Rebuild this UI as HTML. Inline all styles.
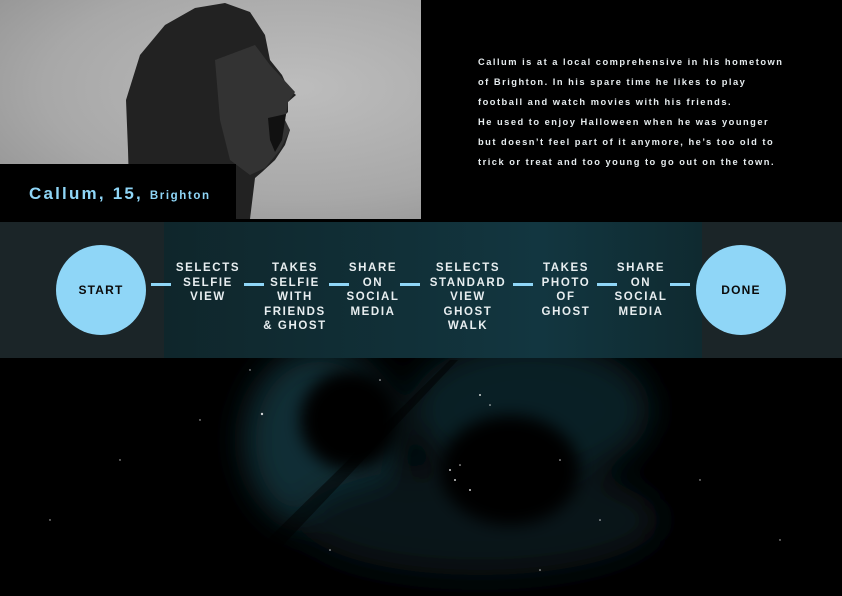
<!DOCTYPE html>
<html><head><meta charset="utf-8"><style>
*{margin:0;padding:0;box-sizing:border-box}
body{width:842px;height:596px;background:#000;position:relative;overflow:hidden;font-family:"Liberation Sans",sans-serif;font-weight:bold}
.abs{position:absolute}
.step{position:absolute;top:261px;color:#e8eef0;font-size:11.5px;letter-spacing:1.6px;line-height:14.5px;text-align:center}
.dash{position:absolute;top:283px;height:3px;background:#8fd6f7}
.circ{position:absolute;width:90px;height:90px;border-radius:50%;background:#8fd6f7;color:#0a0a0a;font-size:12px;letter-spacing:1.2px;display:flex;align-items:center;justify-content:center;top:245px}
p.bio{position:absolute;left:478px;top:52px;width:340px;color:#e6ecee;font-size:9.3px;letter-spacing:1.5px;line-height:20px}
</style></head><body>
<svg class="abs" style="left:0;top:0" width="842" height="596">
<defs>
<filter id="b"><feGaussianBlur stdDeviation="16"/></filter>
<filter id="b2"><feGaussianBlur stdDeviation="8"/></filter>
</defs>
<g filter="url(#b)" opacity="0.75">
<ellipse cx="320" cy="440" rx="75" ry="90" fill="#163e47"/>
<ellipse cx="530" cy="410" rx="120" ry="70" fill="#0f2c33"/>
<ellipse cx="480" cy="520" rx="180" ry="55" fill="#0a1f24"/>
</g>
<g filter="url(#b2)">
<ellipse cx="350" cy="420" rx="50" ry="50" fill="#000"/>
<ellipse cx="510" cy="470" rx="70" ry="55" fill="#000"/>
</g>
<polygon points="450,360 210,596 235,596 458,360" fill="#000" opacity="0.5"/>
<g fill="#fff" opacity="0.8">
<circle cx="262" cy="414" r="1.2"/><circle cx="450" cy="470" r="1"/><circle cx="455" cy="480" r="1"/><circle cx="460" cy="465" r="0.8"/><circle cx="470" cy="490" r="1"/><circle cx="480" cy="395" r="1"/><circle cx="490" cy="405" r="0.8"/><circle cx="560" cy="460" r="0.8"/><circle cx="380" cy="380" r="0.8"/><circle cx="200" cy="420" r="0.7"/><circle cx="120" cy="460" r="0.7"/><circle cx="600" cy="520" r="0.8"/><circle cx="700" cy="480" r="0.7"/><circle cx="780" cy="540" r="0.7"/><circle cx="50" cy="520" r="0.7"/><circle cx="330" cy="550" r="0.8"/><circle cx="540" cy="570" r="0.8"/><circle cx="250" cy="370" r="0.7"/>
</g>
</svg>
<div class="abs" style="left:0;top:222px;width:842px;height:136px;background:#1b2528"></div>
<div class="abs" style="left:164px;top:222px;width:538px;height:136px;background:linear-gradient(90deg,#0f262b 0%,#113038 45%,#123640 70%,#0f2a30 100%)"></div>
<div class="abs" style="left:0;top:0;width:421px;height:219px;background:radial-gradient(ellipse at 70% 40%,#bdbdbd,#a8a8a8 60%,#8e8e8e)"></div>
<svg class="abs" style="left:0;top:0" width="421" height="219">
<path d="M130,219 L128,150 L126,100 L140,55 L165,25 L195,8 L225,3 L250,12 L265,35 L270,60 L282,75 L288,88 L296,95 L288,102 L288,112 L282,118 L290,130 L285,145 L275,160 L262,172 L255,178 L250,219 Z" fill="#222"/>
<path d="M215,60 L255,45 L270,65 L284,80 L295,92 L288,102 L285,120 L290,130 L280,150 L265,168 L250,175 L230,160 L220,120 Z" fill="#333"/>
<path d="M268,118 L286,114 L282,140 L275,152 L270,140 Z" fill="#111"/>
</svg>
<div class="abs" style="left:0;top:164px;width:236px;height:56px;background:#000"></div>
<div class="abs" style="left:29px;top:184px;color:#8fd6f7;font-size:17px;letter-spacing:2.2px">Callum, 15, <span style="font-size:11.5px;letter-spacing:1.6px">Brighton</span></div>
<div class="abs" style="left:0;top:219px;width:842px;height:3px;background:#000"></div>
<p class="bio">Callum is at a local comprehensive in his hometown<br>of Brighton. In his spare time he likes to play<br>football and watch movies with his friends.<br>He used to enjoy Halloween when he was younger<br>but doesn’t feel part of it anymore, he’s too old to<br>trick or treat and too young to go out on the town.</p>
<div class="circ" style="left:56px">START</div>
<div class="circ" style="left:696px">DONE</div>
<div class="dash" style="left:151px;width:20px"></div>
<div class="step" style="left:172px;width:72px">SELECTS<br>SELFIE<br>VIEW</div>
<div class="dash" style="left:244px;width:20px"></div>
<div class="step" style="left:260px;width:70px">TAKES<br>SELFIE<br>WITH<br>FRIENDS<br>&amp; GHOST</div>
<div class="dash" style="left:329px;width:20px"></div>
<div class="step" style="left:342px;width:62px">SHARE<br>ON<br>SOCIAL<br>MEDIA</div>
<div class="dash" style="left:400px;width:20px"></div>
<div class="step" style="left:426px;width:84px">SELECTS<br>STANDARD<br>VIEW<br>GHOST<br>WALK</div>
<div class="dash" style="left:513px;width:20px"></div>
<div class="step" style="left:535px;width:62px">TAKES<br>PHOTO<br>OF<br>GHOST</div>
<div class="dash" style="left:597px;width:20px"></div>
<div class="step" style="left:608px;width:66px">SHARE<br>ON<br>SOCIAL<br>MEDIA</div>
<div class="dash" style="left:670px;width:20px"></div>
</body></html>
